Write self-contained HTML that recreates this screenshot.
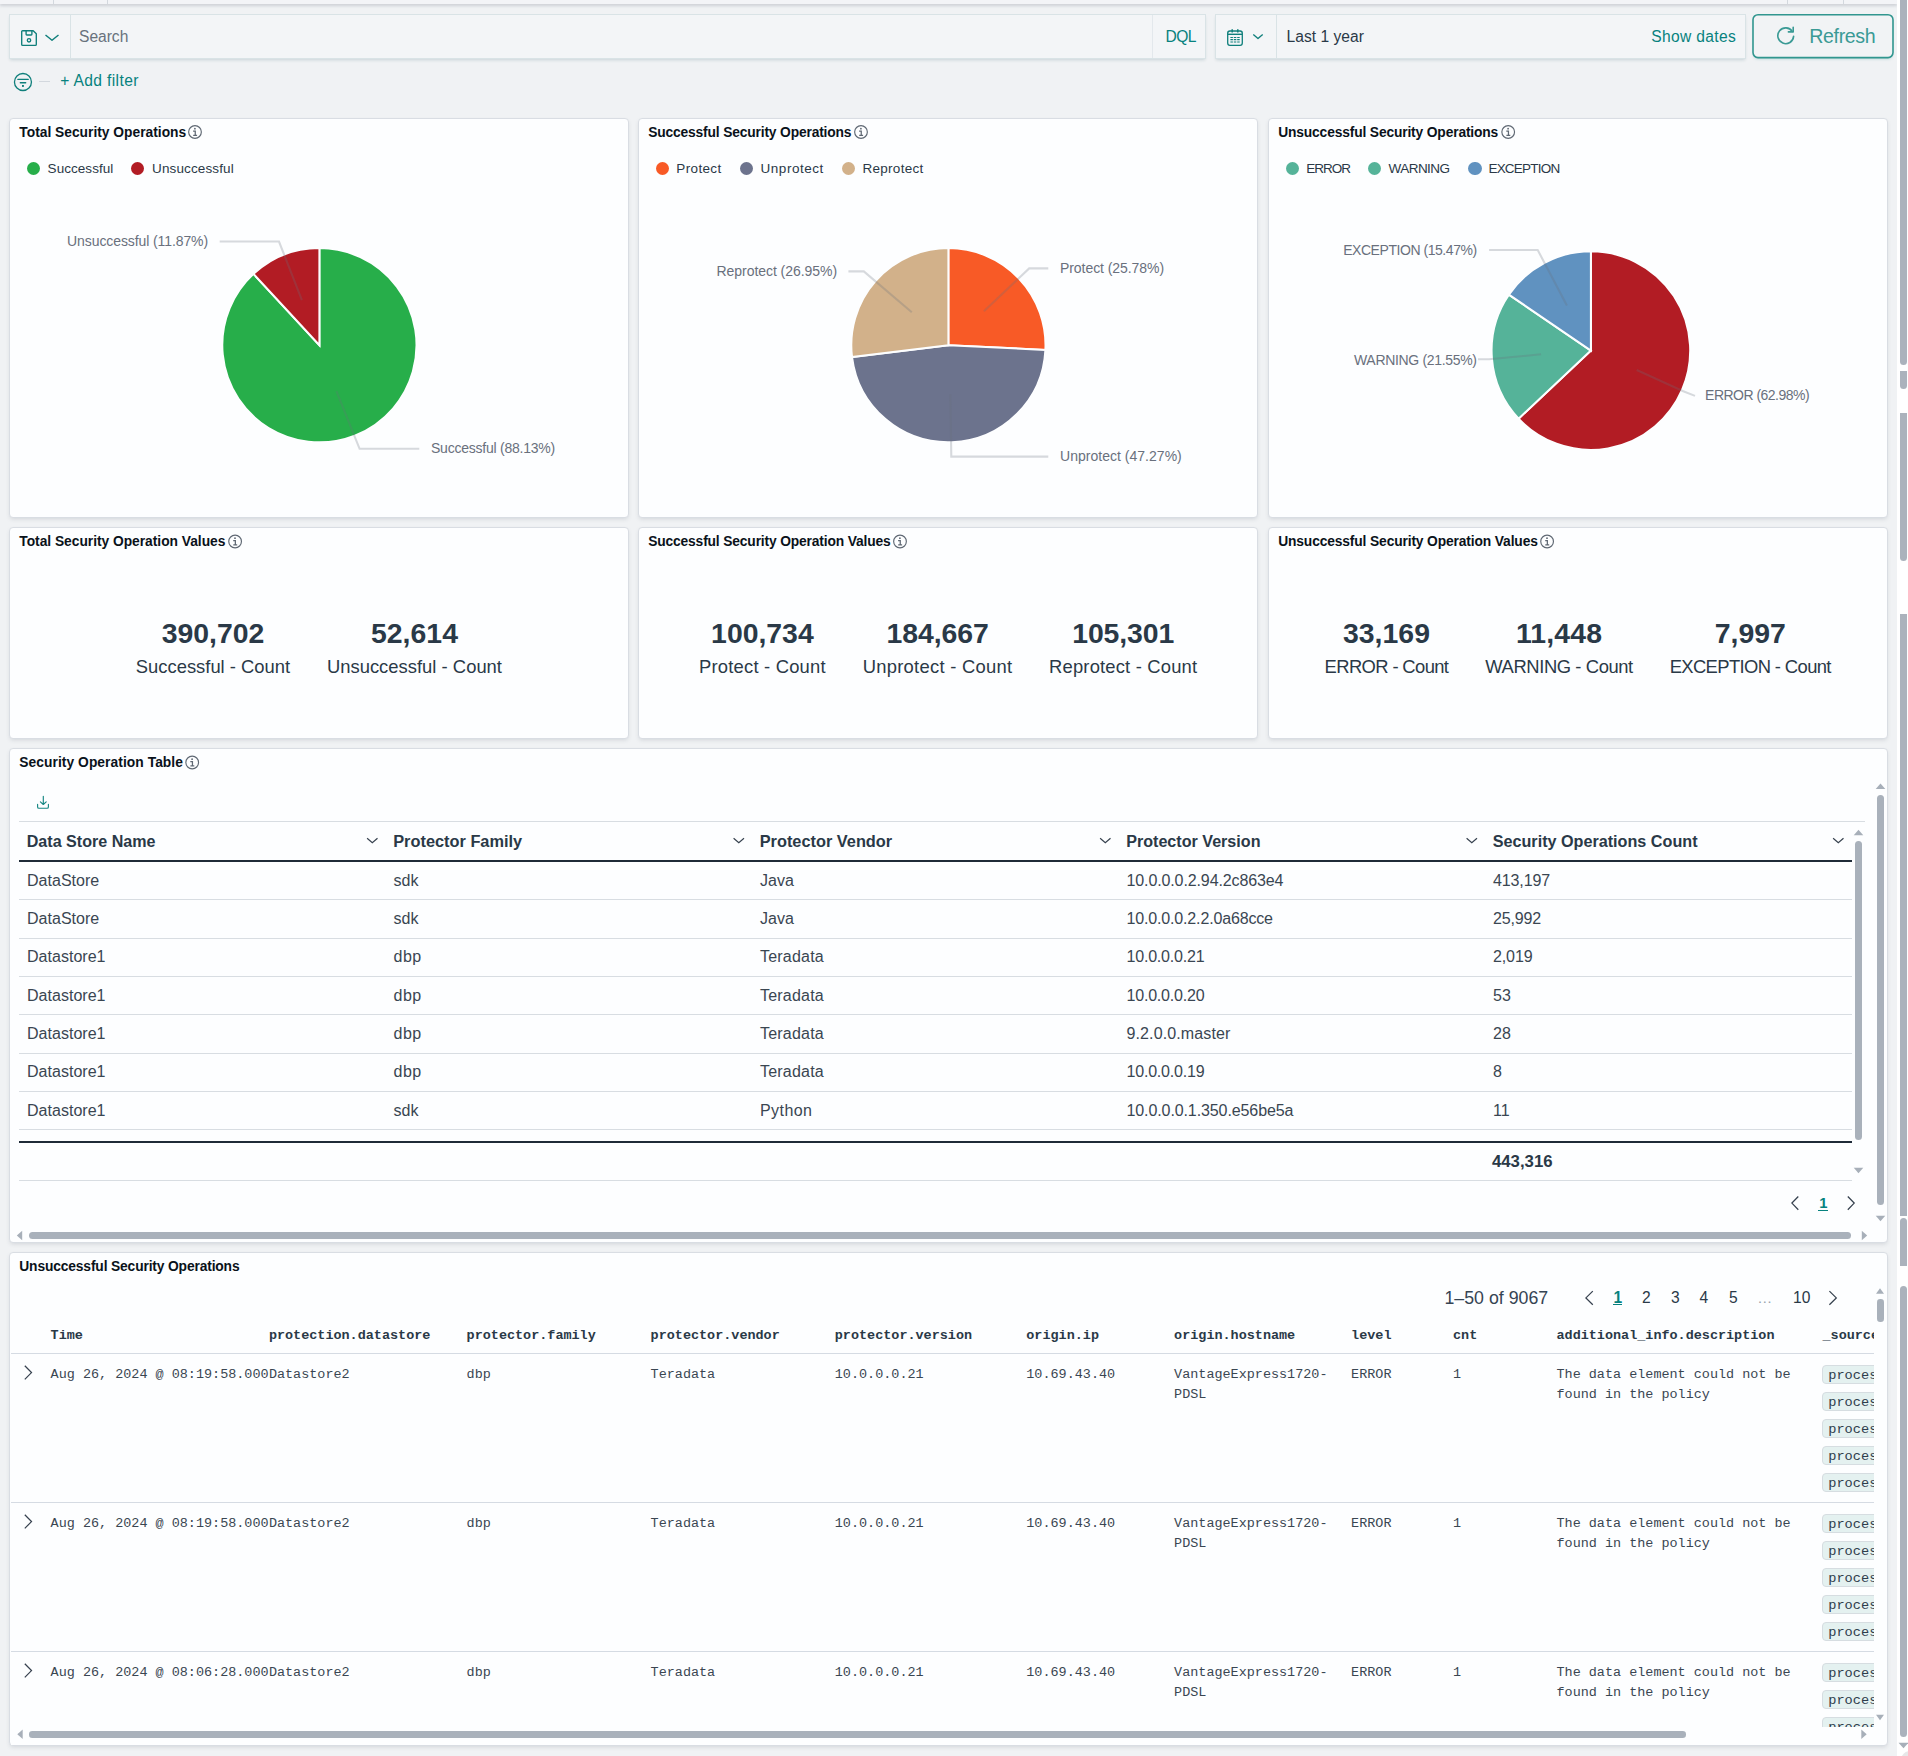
<!DOCTYPE html>
<html><head><meta charset="utf-8"><title>Dashboard</title>
<style>
html,body{margin:0;padding:0;}
body{width:1908px;height:1756px;overflow:hidden;position:relative;background:#f0f2f4;font-family:"Liberation Sans",sans-serif;}
.t{position:absolute;white-space:nowrap;line-height:normal;}
.m{font-family:"Liberation Mono",monospace;}
.b{position:absolute;box-sizing:border-box;}
.panel{position:absolute;box-sizing:border-box;background:#fdfeff;border:1px solid #d9dde3;border-radius:4px;box-shadow:0 2px 4px -1px rgba(60,70,90,0.17);}
svg{position:absolute;overflow:visible;}
</style></head><body>
<div class="b" style="left:0px;top:0px;width:1897px;height:4px;background:#f3f4f7;box-shadow:0 2px 3px rgba(40,50,70,0.17);"></div>
<div class="b" style="left:53px;top:0px;width:1px;height:4px;background:#d3d8de;"></div>
<div class="b" style="left:107px;top:0px;width:1px;height:4px;background:#d3d8de;"></div>
<div class="b" style="left:1787px;top:0px;width:1px;height:4px;background:#d3d8de;"></div>
<div class="b" style="left:1843px;top:0px;width:1px;height:4px;background:#d3d8de;"></div>
<div class="b" style="left:9px;top:14px;width:1197px;height:45px;background:#f3f5f7;border:1px solid #d9e3e6;box-shadow:0 2px 3px -1px rgba(110,140,150,0.3);"></div>
<div class="b" style="left:70px;top:15px;width:1px;height:43px;background:#d9e3e6;"></div>
<div class="b" style="left:1152px;top:15px;width:1px;height:43px;background:#e3e8ec;"></div>
<div class="t" style="left:79.00px;top:28px;font-size:15.60px;color:#68727d;letter-spacing:-0.021px;">Search</div>
<div class="t" style="left:1165.50px;top:28px;font-size:15.60px;color:#07827E;letter-spacing:-0.525px;">DQL</div>
<div class="b" style="left:1215px;top:14px;width:531px;height:45px;background:#f3f5f7;border:1px solid #d9e3e6;box-shadow:0 2px 3px -1px rgba(110,140,150,0.3);"></div>
<div class="b" style="left:1276px;top:15px;width:1px;height:43px;background:#d9e3e6;"></div>
<div class="t" style="left:1286.50px;top:28px;font-size:15.60px;color:#2A3947;letter-spacing:0.029px;">Last 1 year</div>
<div class="t" style="left:1651.20px;top:28px;font-size:15.60px;color:#07827E;letter-spacing:0.338px;">Show dates</div>
<div class="b" style="left:1753px;top:15px;width:140px;height:42px;border-radius:5px;background:#f1f3f5;box-shadow:0 3px 3px -1px rgba(7,130,126,0.25);"></div>
<div class="t" style="left:1809.30px;top:25px;font-size:19.60px;color:#3a9a95;letter-spacing:-0.376px;">Refresh</div>
<div class="b" style="left:39px;top:81px;width:11px;height:1px;background:#d3d8de;"></div>
<div class="t" style="left:60.20px;top:72px;font-size:15.60px;color:#07827E;letter-spacing:0.371px;">+ Add filter</div>
<div class="panel" style="left:9px;top:118px;width:620px;height:400px"></div>
<div class="panel" style="left:9px;top:527px;width:620px;height:212px"></div>
<div class="panel" style="left:638px;top:118px;width:620px;height:400px"></div>
<div class="panel" style="left:638px;top:527px;width:620px;height:212px"></div>
<div class="panel" style="left:1268px;top:118px;width:620px;height:400px"></div>
<div class="panel" style="left:1268px;top:527px;width:620px;height:212px"></div>
<div class="panel" style="left:9px;top:748px;width:1879px;height:495px"></div>
<div class="panel" style="left:9px;top:1252px;width:1879px;height:494px"></div>
<div class="t" style="left:19.30px;top:125px;font-size:13.80px;font-weight:700;color:#0A121A;">Total Security Operations</div>
<div class="t" style="left:648.20px;top:125px;font-size:13.80px;font-weight:700;color:#0A121A;letter-spacing:-0.155px;">Successful Security Operations</div>
<div class="t" style="left:1278.20px;top:125px;font-size:13.80px;font-weight:700;color:#0A121A;letter-spacing:-0.147px;">Unsuccessful Security Operations</div>
<div class="t" style="left:19.30px;top:534px;font-size:13.80px;font-weight:700;color:#0A121A;letter-spacing:-0.023px;">Total Security Operation Values</div>
<div class="t" style="left:648.20px;top:534px;font-size:13.80px;font-weight:700;color:#0A121A;letter-spacing:-0.148px;">Successful Security Operation Values</div>
<div class="t" style="left:1278.20px;top:534px;font-size:13.80px;font-weight:700;color:#0A121A;letter-spacing:-0.132px;">Unsuccessful Security Operation Values</div>
<div class="t" style="left:19.30px;top:755px;font-size:13.80px;font-weight:700;color:#0A121A;letter-spacing:0.058px;">Security Operation Table</div>
<div class="t" style="left:19.30px;top:1259px;font-size:13.80px;font-weight:700;color:#0A121A;letter-spacing:-0.141px;">Unsuccessful Security Operations</div>
<div class="b" style="left:26.8px;top:161.7px;width:13.5px;height:13.5px;border-radius:50%;background:#27AE4A"></div>
<div class="t" style="left:47.60px;top:161px;font-size:13.50px;color:#2A3947;letter-spacing:0.052px;">Successful</div>
<div class="b" style="left:130.8px;top:161.7px;width:13.5px;height:13.5px;border-radius:50%;background:#B21C24"></div>
<div class="t" style="left:152.00px;top:161px;font-size:13.50px;color:#2A3947;letter-spacing:0.127px;">Unsuccessful</div>
<div class="b" style="left:655.8px;top:161.7px;width:13.5px;height:13.5px;border-radius:50%;background:#F85A26"></div>
<div class="t" style="left:676.30px;top:161px;font-size:13.50px;color:#2A3947;letter-spacing:0.362px;">Protect</div>
<div class="b" style="left:739.6px;top:161.7px;width:13.5px;height:13.5px;border-radius:50%;background:#6C738D"></div>
<div class="t" style="left:760.50px;top:161px;font-size:13.50px;color:#2A3947;letter-spacing:0.541px;">Unprotect</div>
<div class="b" style="left:841.6px;top:161.7px;width:13.5px;height:13.5px;border-radius:50%;background:#D2B18A"></div>
<div class="t" style="left:862.50px;top:161px;font-size:13.50px;color:#2A3947;letter-spacing:0.275px;">Reprotect</div>
<div class="b" style="left:1285.8px;top:161.7px;width:13.5px;height:13.5px;border-radius:50%;background:#55B399"></div>
<div class="t" style="left:1306.30px;top:161px;font-size:13.50px;color:#2A3947;letter-spacing:-1.031px;">ERROR</div>
<div class="b" style="left:1367.7px;top:161.7px;width:13.5px;height:13.5px;border-radius:50%;background:#55B399"></div>
<div class="t" style="left:1388.50px;top:161px;font-size:13.50px;color:#2A3947;letter-spacing:-0.535px;">WARNING</div>
<div class="b" style="left:1468.0px;top:161.7px;width:13.5px;height:13.5px;border-radius:50%;background:#6092C0"></div>
<div class="t" style="left:1488.40px;top:161px;font-size:13.50px;color:#2A3947;letter-spacing:-0.768px;">EXCEPTION</div>
<div class="t" style="left:67.10px;top:233px;font-size:14.00px;color:#69707D;letter-spacing:-0.096px;">Unsuccessful (11.87%)</div>
<div class="t" style="left:431.00px;top:440px;font-size:14.00px;color:#69707D;letter-spacing:-0.231px;">Successful (88.13%)</div>
<div class="t" style="left:716.50px;top:263px;font-size:14.00px;color:#69707D;letter-spacing:-0.050px;">Reprotect (26.95%)</div>
<div class="t" style="left:1060.00px;top:260px;font-size:14.00px;color:#69707D;letter-spacing:-0.066px;">Protect (25.78%)</div>
<div class="t" style="left:1060.00px;top:448px;font-size:14.00px;color:#69707D;letter-spacing:0.023px;">Unprotect (47.27%)</div>
<div class="t" style="left:1343.20px;top:242px;font-size:14.00px;color:#69707D;letter-spacing:-0.450px;">EXCEPTION (15.47%)</div>
<div class="t" style="left:1354.00px;top:352px;font-size:14.00px;color:#69707D;letter-spacing:-0.321px;">WARNING (21.55%)</div>
<div class="t" style="left:1705.10px;top:387px;font-size:14.00px;color:#69707D;letter-spacing:-0.518px;">ERROR (62.98%)</div>
<div class="t" style="left:161.70px;top:617px;font-size:28.40px;font-weight:700;color:#2A3947;letter-spacing:-0.008px;">390,702</div>
<div class="t" style="left:135.85px;top:656px;font-size:18.40px;color:#2A3947;letter-spacing:-0.007px;">Successful - Count</div>
<div class="t" style="left:370.90px;top:617px;font-size:28.40px;font-weight:700;color:#2A3947;letter-spacing:0.056px;">52,614</div>
<div class="t" style="left:326.90px;top:656px;font-size:18.40px;color:#2A3947;letter-spacing:0.016px;">Unsuccessful - Count</div>
<div class="t" style="left:711.10px;top:617px;font-size:28.40px;font-weight:700;color:#2A3947;letter-spacing:-0.008px;">100,734</div>
<div class="t" style="left:699.00px;top:656px;font-size:18.40px;color:#2A3947;letter-spacing:0.204px;">Protect - Count</div>
<div class="t" style="left:886.45px;top:617px;font-size:28.40px;font-weight:700;color:#2A3947;letter-spacing:-0.051px;">184,667</div>
<div class="t" style="left:862.65px;top:656px;font-size:18.40px;color:#2A3947;letter-spacing:0.275px;">Unprotect - Count</div>
<div class="t" style="left:1072.20px;top:617px;font-size:28.40px;font-weight:700;color:#2A3947;letter-spacing:-0.094px;">105,301</div>
<div class="t" style="left:1049.05px;top:656px;font-size:18.40px;color:#2A3947;letter-spacing:0.181px;">Reprotect - Count</div>
<div class="t" style="left:1342.90px;top:617px;font-size:28.40px;font-weight:700;color:#2A3947;letter-spacing:0.056px;">33,169</div>
<div class="t" style="left:1324.60px;top:656px;font-size:18.40px;color:#2A3947;letter-spacing:-0.623px;">ERROR - Count</div>
<div class="t" style="left:1516.00px;top:617px;font-size:28.40px;font-weight:700;color:#2A3947;letter-spacing:0.150px;">11,448</div>
<div class="t" style="left:1485.30px;top:656px;font-size:18.40px;color:#2A3947;letter-spacing:-0.406px;">WARNING - Count</div>
<div class="t" style="left:1714.75px;top:617px;font-size:28.40px;font-weight:700;color:#2A3947;letter-spacing:0.006px;">7,997</div>
<div class="t" style="left:1669.65px;top:656px;font-size:18.40px;color:#2A3947;letter-spacing:-0.617px;">EXCEPTION - Count</div>
<div class="b" style="left:19px;top:821px;width:1846px;height:1px;background:#d8dde2;"></div>
<div class="t" style="left:26.75px;top:832px;font-size:16.09px;font-weight:700;color:#2A3947;">Data Store Name</div>
<div class="t" style="left:393.20px;top:832px;font-size:16.35px;font-weight:700;color:#2A3947;">Protector Family</div>
<div class="t" style="left:759.70px;top:832px;font-size:16.33px;font-weight:700;color:#2A3947;">Protector Vendor</div>
<div class="t" style="left:1126.20px;top:832px;font-size:16.13px;font-weight:700;color:#2A3947;">Protector Version</div>
<div class="t" style="left:1492.70px;top:832px;font-size:16.18px;font-weight:700;color:#2A3947;">Security Operations Count</div>
<div class="b" style="left:19px;top:860px;width:1833px;height:2px;background:#1f2b38;"></div>
<div class="t" style="left:27.05px;top:871px;font-size:16.05px;color:#3a4652;">DataStore</div>
<div class="t" style="left:393.50px;top:871px;font-size:16.05px;color:#3a4652;">sdk</div>
<div class="t" style="left:760.00px;top:871px;font-size:16.05px;color:#3a4652;">Java</div>
<div class="t" style="left:1126.50px;top:871px;font-size:16.05px;color:#3a4652;letter-spacing:-0.129px;">10.0.0.0.2.94.2c863e4</div>
<div class="t" style="left:1493.00px;top:871px;font-size:16.05px;color:#3a4652;letter-spacing:-0.144px;">413,197</div>
<div class="b" style="left:19px;top:899px;width:1833px;height:1px;background:#d8dde2;"></div>
<div class="t" style="left:27.05px;top:909px;font-size:16.05px;color:#3a4652;">DataStore</div>
<div class="t" style="left:393.50px;top:909px;font-size:16.05px;color:#3a4652;">sdk</div>
<div class="t" style="left:760.00px;top:909px;font-size:16.05px;color:#3a4652;">Java</div>
<div class="t" style="left:1126.50px;top:909px;font-size:16.05px;color:#3a4652;letter-spacing:-0.170px;">10.0.0.0.2.2.0a68cce</div>
<div class="t" style="left:1493.00px;top:909px;font-size:16.05px;color:#3a4652;letter-spacing:-0.180px;">25,992</div>
<div class="b" style="left:19px;top:938px;width:1833px;height:1px;background:#d8dde2;"></div>
<div class="t" style="left:27.05px;top:947px;font-size:16.05px;color:#3a4652;">Datastore1</div>
<div class="t" style="left:393.50px;top:947px;font-size:16.05px;color:#3a4652;letter-spacing:0.492px;">dbp</div>
<div class="t" style="left:760.00px;top:947px;font-size:16.05px;color:#3a4652;letter-spacing:0.194px;">Teradata</div>
<div class="t" style="left:1126.50px;top:947px;font-size:16.05px;color:#3a4652;letter-spacing:-0.209px;">10.0.0.0.21</div>
<div class="t" style="left:1493.00px;top:947px;font-size:16.05px;color:#3a4652;letter-spacing:-0.131px;">2,019</div>
<div class="b" style="left:19px;top:976px;width:1833px;height:1px;background:#d8dde2;"></div>
<div class="t" style="left:27.05px;top:986px;font-size:16.05px;color:#3a4652;">Datastore1</div>
<div class="t" style="left:393.50px;top:986px;font-size:16.05px;color:#3a4652;letter-spacing:0.492px;">dbp</div>
<div class="t" style="left:760.00px;top:986px;font-size:16.05px;color:#3a4652;letter-spacing:0.194px;">Teradata</div>
<div class="t" style="left:1126.50px;top:986px;font-size:16.05px;color:#3a4652;letter-spacing:-0.209px;">10.0.0.0.20</div>
<div class="t" style="left:1493.00px;top:986px;font-size:16.05px;color:#3a4652;">53</div>
<div class="b" style="left:19px;top:1014px;width:1833px;height:1px;background:#d8dde2;"></div>
<div class="t" style="left:27.05px;top:1024px;font-size:16.05px;color:#3a4652;">Datastore1</div>
<div class="t" style="left:393.50px;top:1024px;font-size:16.05px;color:#3a4652;letter-spacing:0.492px;">dbp</div>
<div class="t" style="left:760.00px;top:1024px;font-size:16.05px;color:#3a4652;letter-spacing:0.194px;">Teradata</div>
<div class="t" style="left:1126.50px;top:1024px;font-size:16.05px;color:#3a4652;letter-spacing:0.102px;">9.2.0.0.master</div>
<div class="t" style="left:1493.00px;top:1024px;font-size:16.05px;color:#3a4652;">28</div>
<div class="b" style="left:19px;top:1053px;width:1833px;height:1px;background:#d8dde2;"></div>
<div class="t" style="left:27.05px;top:1062px;font-size:16.05px;color:#3a4652;">Datastore1</div>
<div class="t" style="left:393.50px;top:1062px;font-size:16.05px;color:#3a4652;letter-spacing:0.492px;">dbp</div>
<div class="t" style="left:760.00px;top:1062px;font-size:16.05px;color:#3a4652;letter-spacing:0.194px;">Teradata</div>
<div class="t" style="left:1126.50px;top:1062px;font-size:16.05px;color:#3a4652;letter-spacing:-0.209px;">10.0.0.0.19</div>
<div class="t" style="left:1493.00px;top:1062px;font-size:16.05px;color:#3a4652;">8</div>
<div class="b" style="left:19px;top:1091px;width:1833px;height:1px;background:#d8dde2;"></div>
<div class="t" style="left:27.05px;top:1101px;font-size:16.05px;color:#3a4652;">Datastore1</div>
<div class="t" style="left:393.50px;top:1101px;font-size:16.05px;color:#3a4652;">sdk</div>
<div class="t" style="left:760.00px;top:1101px;font-size:16.05px;color:#3a4652;letter-spacing:0.424px;">Python</div>
<div class="t" style="left:1126.50px;top:1101px;font-size:16.05px;color:#3a4652;letter-spacing:-0.116px;">10.0.0.0.1.350.e56be5a</div>
<div class="t" style="left:1493.00px;top:1101px;font-size:16.05px;color:#3a4652;">11</div>
<div class="b" style="left:19px;top:1129px;width:1833px;height:1px;background:#d8dde2;"></div>
<div class="b" style="left:19px;top:1141px;width:1833px;height:2px;background:#1f2b38;"></div>
<div class="t" style="left:1492.00px;top:1152px;font-size:16.74px;font-weight:700;color:#2A3947;">443,316</div>
<div class="b" style="left:19px;top:1180px;width:1833px;height:1px;background:#d8dde2;"></div>
<div class="t" style="left:1819.20px;top:1195px;font-size:14.80px;font-weight:700;color:#07827E;">1</div>
<div class="b" style="left:1818px;top:1210px;width:10px;height:1px;background:#07827E;"></div>
<div class="b" style="left:1877px;top:795px;width:7px;height:410px;background:#a9b1bb;border-radius:3.5px;"></div>
<div class="b" style="left:1855px;top:841px;width:7px;height:299px;background:#a9b1bb;border-radius:3.5px;"></div>
<div class="b" style="left:29px;top:1232px;width:1822px;height:7px;background:#a9b1bb;border-radius:3.5px;"></div>
<div class="t" style="left:1444.50px;top:1288px;font-size:17.76px;color:#364453;">1–50 of 9067</div>
<div class="t" style="left:1613.60px;top:1289px;font-size:15.60px;font-weight:700;color:#07827E;">1</div>
<div class="b" style="left:1613px;top:1304px;width:9px;height:1px;background:#07827E;"></div>
<div class="t" style="left:1642.00px;top:1289px;font-size:15.60px;color:#2A3947;">2</div>
<div class="t" style="left:1671.00px;top:1289px;font-size:15.60px;color:#2A3947;">3</div>
<div class="t" style="left:1699.60px;top:1289px;font-size:15.60px;color:#2A3947;">4</div>
<div class="t" style="left:1729.00px;top:1289px;font-size:15.60px;color:#2A3947;">5</div>
<div class="t" style="left:1757.20px;top:1289px;font-size:15.00px;color:#98a2ad;">…</div>
<div class="t" style="left:1793.10px;top:1289px;font-size:15.60px;color:#2A3947;">10</div>
<div class="t m" style="left:50.60px;top:1328px;font-size:13.46px;font-weight:700;color:#2A3947;">Time</div>
<div class="t m" style="left:268.90px;top:1328px;font-size:13.46px;font-weight:700;color:#2A3947;">protection.datastore</div>
<div class="t m" style="left:466.60px;top:1328px;font-size:13.46px;font-weight:700;color:#2A3947;">protector.family</div>
<div class="t m" style="left:650.60px;top:1328px;font-size:13.46px;font-weight:700;color:#2A3947;">protector.vendor</div>
<div class="t m" style="left:834.80px;top:1328px;font-size:13.46px;font-weight:700;color:#2A3947;">protector.version</div>
<div class="t m" style="left:1026.30px;top:1328px;font-size:13.46px;font-weight:700;color:#2A3947;">origin.ip</div>
<div class="t m" style="left:1174.10px;top:1328px;font-size:13.46px;font-weight:700;color:#2A3947;">origin.hostname</div>
<div class="t m" style="left:1351.10px;top:1328px;font-size:13.46px;font-weight:700;color:#2A3947;">level</div>
<div class="t m" style="left:1453.00px;top:1328px;font-size:13.46px;font-weight:700;color:#2A3947;">cnt</div>
<div class="t m" style="left:1556.50px;top:1328px;font-size:13.46px;font-weight:700;color:#2A3947;">additional_info.description</div>
<div class="b" style="left:1815px;top:1320px;width:59px;height:407px;overflow:hidden">
<div class="t m" style="left:7.50px;top:8px;font-size:13.46px;font-weight:700;color:#2A3947;">_source</div>
<div class="b" style="left:7px;top:45px;width:80px;height:19px;background:#e4f1f0;border:1px solid #d6dde1;border-radius:4px;"></div>
<div class="t m" style="left:13.20px;top:48px;font-size:13.66px;color:#2f3d4c;">process</div>
<div class="b" style="left:7px;top:72px;width:80px;height:19px;background:#e4f1f0;border:1px solid #d6dde1;border-radius:4px;"></div>
<div class="t m" style="left:13.20px;top:75px;font-size:13.66px;color:#2f3d4c;">process</div>
<div class="b" style="left:7px;top:99px;width:80px;height:19px;background:#e4f1f0;border:1px solid #d6dde1;border-radius:4px;"></div>
<div class="t m" style="left:13.20px;top:102px;font-size:13.66px;color:#2f3d4c;">process</div>
<div class="b" style="left:7px;top:126px;width:80px;height:19px;background:#e4f1f0;border:1px solid #d6dde1;border-radius:4px;"></div>
<div class="t m" style="left:13.20px;top:129px;font-size:13.66px;color:#2f3d4c;">process</div>
<div class="b" style="left:7px;top:153px;width:80px;height:19px;background:#e4f1f0;border:1px solid #d6dde1;border-radius:4px;"></div>
<div class="t m" style="left:13.20px;top:156px;font-size:13.66px;color:#2f3d4c;">process</div>
<div class="b" style="left:7px;top:194px;width:80px;height:19px;background:#e4f1f0;border:1px solid #d6dde1;border-radius:4px;"></div>
<div class="t m" style="left:13.20px;top:197px;font-size:13.66px;color:#2f3d4c;">process</div>
<div class="b" style="left:7px;top:221px;width:80px;height:19px;background:#e4f1f0;border:1px solid #d6dde1;border-radius:4px;"></div>
<div class="t m" style="left:13.20px;top:224px;font-size:13.66px;color:#2f3d4c;">process</div>
<div class="b" style="left:7px;top:248px;width:80px;height:19px;background:#e4f1f0;border:1px solid #d6dde1;border-radius:4px;"></div>
<div class="t m" style="left:13.20px;top:251px;font-size:13.66px;color:#2f3d4c;">process</div>
<div class="b" style="left:7px;top:275px;width:80px;height:19px;background:#e4f1f0;border:1px solid #d6dde1;border-radius:4px;"></div>
<div class="t m" style="left:13.20px;top:278px;font-size:13.66px;color:#2f3d4c;">process</div>
<div class="b" style="left:7px;top:302px;width:80px;height:19px;background:#e4f1f0;border:1px solid #d6dde1;border-radius:4px;"></div>
<div class="t m" style="left:13.20px;top:305px;font-size:13.66px;color:#2f3d4c;">process</div>
<div class="b" style="left:7px;top:343px;width:80px;height:19px;background:#e4f1f0;border:1px solid #d6dde1;border-radius:4px;"></div>
<div class="t m" style="left:13.20px;top:346px;font-size:13.66px;color:#2f3d4c;">process</div>
<div class="b" style="left:7px;top:370px;width:80px;height:19px;background:#e4f1f0;border:1px solid #d6dde1;border-radius:4px;"></div>
<div class="t m" style="left:13.20px;top:373px;font-size:13.66px;color:#2f3d4c;">process</div>
<div class="b" style="left:7px;top:397px;width:80px;height:19px;background:#e4f1f0;border:1px solid #d6dde1;border-radius:4px;"></div>
<div class="t m" style="left:13.20px;top:400px;font-size:13.66px;color:#2f3d4c;">process</div>
<div class="b" style="left:7px;top:424px;width:80px;height:19px;background:#e4f1f0;border:1px solid #d6dde1;border-radius:4px;"></div>
<div class="t m" style="left:13.20px;top:427px;font-size:13.66px;color:#2f3d4c;">process</div>
<div class="b" style="left:7px;top:451px;width:80px;height:19px;background:#e4f1f0;border:1px solid #d6dde1;border-radius:4px;"></div>
<div class="t m" style="left:13.20px;top:454px;font-size:13.66px;color:#2f3d4c;">process</div>
</div>
<div class="b" style="left:11px;top:1353px;width:1863px;height:1px;background:#d5dbe3;"></div>
<div class="t m" style="left:50.60px;top:1367px;font-size:13.46px;color:#3a4652;">Aug 26, 2024 @ 08:19:58.000</div>
<div class="t m" style="left:268.90px;top:1367px;font-size:13.46px;color:#3a4652;">Datastore2</div>
<div class="t m" style="left:466.60px;top:1367px;font-size:13.46px;color:#3a4652;">dbp</div>
<div class="t m" style="left:650.60px;top:1367px;font-size:13.46px;color:#3a4652;">Teradata</div>
<div class="t m" style="left:834.80px;top:1367px;font-size:13.46px;color:#3a4652;">10.0.0.0.21</div>
<div class="t m" style="left:1026.30px;top:1367px;font-size:13.46px;color:#3a4652;">10.69.43.40</div>
<div class="t m" style="left:1174.10px;top:1367px;font-size:13.46px;color:#3a4652;">VantageExpress1720-</div>
<div class="t m" style="left:1351.10px;top:1367px;font-size:13.46px;color:#3a4652;">ERROR</div>
<div class="t m" style="left:1453.00px;top:1367px;font-size:13.46px;color:#3a4652;">1</div>
<div class="t m" style="left:1556.50px;top:1367px;font-size:13.46px;color:#3a4652;">The data element could not be</div>
<div class="t m" style="left:1174.10px;top:1387px;font-size:13.46px;color:#3a4652;">PDSL</div>
<div class="t m" style="left:1556.50px;top:1387px;font-size:13.46px;color:#3a4652;">found in the policy</div>
<div class="b" style="left:11px;top:1502px;width:1863px;height:1px;background:#d5dbe3;"></div>
<div class="t m" style="left:50.60px;top:1516px;font-size:13.46px;color:#3a4652;">Aug 26, 2024 @ 08:19:58.000</div>
<div class="t m" style="left:268.90px;top:1516px;font-size:13.46px;color:#3a4652;">Datastore2</div>
<div class="t m" style="left:466.60px;top:1516px;font-size:13.46px;color:#3a4652;">dbp</div>
<div class="t m" style="left:650.60px;top:1516px;font-size:13.46px;color:#3a4652;">Teradata</div>
<div class="t m" style="left:834.80px;top:1516px;font-size:13.46px;color:#3a4652;">10.0.0.0.21</div>
<div class="t m" style="left:1026.30px;top:1516px;font-size:13.46px;color:#3a4652;">10.69.43.40</div>
<div class="t m" style="left:1174.10px;top:1516px;font-size:13.46px;color:#3a4652;">VantageExpress1720-</div>
<div class="t m" style="left:1351.10px;top:1516px;font-size:13.46px;color:#3a4652;">ERROR</div>
<div class="t m" style="left:1453.00px;top:1516px;font-size:13.46px;color:#3a4652;">1</div>
<div class="t m" style="left:1556.50px;top:1516px;font-size:13.46px;color:#3a4652;">The data element could not be</div>
<div class="t m" style="left:1174.10px;top:1536px;font-size:13.46px;color:#3a4652;">PDSL</div>
<div class="t m" style="left:1556.50px;top:1536px;font-size:13.46px;color:#3a4652;">found in the policy</div>
<div class="b" style="left:11px;top:1651px;width:1863px;height:1px;background:#d5dbe3;"></div>
<div class="t m" style="left:50.60px;top:1665px;font-size:13.46px;color:#3a4652;">Aug 26, 2024 @ 08:06:28.000</div>
<div class="t m" style="left:268.90px;top:1665px;font-size:13.46px;color:#3a4652;">Datastore2</div>
<div class="t m" style="left:466.60px;top:1665px;font-size:13.46px;color:#3a4652;">dbp</div>
<div class="t m" style="left:650.60px;top:1665px;font-size:13.46px;color:#3a4652;">Teradata</div>
<div class="t m" style="left:834.80px;top:1665px;font-size:13.46px;color:#3a4652;">10.0.0.0.21</div>
<div class="t m" style="left:1026.30px;top:1665px;font-size:13.46px;color:#3a4652;">10.69.43.40</div>
<div class="t m" style="left:1174.10px;top:1665px;font-size:13.46px;color:#3a4652;">VantageExpress1720-</div>
<div class="t m" style="left:1351.10px;top:1665px;font-size:13.46px;color:#3a4652;">ERROR</div>
<div class="t m" style="left:1453.00px;top:1665px;font-size:13.46px;color:#3a4652;">1</div>
<div class="t m" style="left:1556.50px;top:1665px;font-size:13.46px;color:#3a4652;">The data element could not be</div>
<div class="t m" style="left:1174.10px;top:1685px;font-size:13.46px;color:#3a4652;">PDSL</div>
<div class="t m" style="left:1556.50px;top:1685px;font-size:13.46px;color:#3a4652;">found in the policy</div>
<div class="b" style="left:11px;top:1728px;width:1864px;height:17px;background:#fdfeff;"></div>
<div class="b" style="left:28.6px;top:1731px;width:1657.0px;height:6.6px;background:#a9b1bb;border-radius:3.3px;"></div>
<div class="b" style="left:1877px;top:1299.3px;width:6.5px;height:23.100000000000136px;background:#a9b1bb;border-radius:3.25px;"></div>
<div class="b" style="left:1897px;top:0px;width:11px;height:1756px;background:#ffffff;"></div>
<div class="b" style="left:1900px;top:0px;width:7px;height:364.8px;background:#abb2bc;border-radius:0px 0px 3.5px 3.5px;"></div>
<div class="b" style="left:1900px;top:371px;width:7px;height:17.899999999999977px;background:#abb2bc;border-radius:0px 0px 3.5px 3.5px;"></div>
<div class="b" style="left:1900px;top:413px;width:7px;height:147.79999999999995px;background:#abb2bc;border-radius:0px 0px 3.5px 3.5px;"></div>
<div class="b" style="left:1900px;top:614.1px;width:7px;height:601.6px;background:#abb2bc;border-radius:0px 0px 0px 0px;"></div>
<div class="b" style="left:1900px;top:1218px;width:7px;height:47.90000000000009px;background:#abb2bc;border-radius:3.5px 3.5px 0px 0px;"></div>
<div class="b" style="left:1900px;top:1286px;width:7px;height:450.79999999999995px;background:#abb2bc;border-radius:3.5px 3.5px 3.5px 3.5px;"></div>
<svg style="left:0;top:0" width="1908" height="1756"><g transform="translate(21 30)" fill="none" stroke="#0f7f7b" stroke-width="1.35" stroke-linejoin="round"><path d="M.7 1.6a.9.9 0 0 1 .9-.9H12.2L15.3 3.8V14.4a.9.9 0 0 1-.9.9H1.6a.9.9 0 0 1-.9-.9z"/><path d="M5.1 .8V4.3a.7.7 0 0 0 .7.7h4.4a.7.7 0 0 0 .7-.7V.8"/><circle cx="8" cy="10.3" r="1.7"/></g><path d="M45.5 35L52 40.3L58.5 35" fill="none" stroke="#0f7f7b" stroke-width="1.45" stroke-linejoin="round"/><g fill="none" stroke="#0f7f7b" stroke-width="1.3"><rect x="1227.7" y="31" width="14.6" height="14.3" rx="2.2"/><path d="M1227.7 34.3H1242.3" stroke-width="1.4"/><path d="M1232.2 29.2V32.6M1237.8 29.2V32.6" stroke-width="1.5"/><path d="M1230.4 37.5h2.5M1233.8 37.5h2.5M1237.2 37.5h2.5M1230.4 39.7h2.5M1233.8 39.7h2.5M1237.2 39.7h2.5M1230.4 42h2.5M1233.8 42h2.5M1237.2 42h2.5" stroke-width="1.2"/></g><path d="M1253.3 34.4L1258 38.5L1262.7 34.4" fill="none" stroke="#0f7f7b" stroke-width="1.35" stroke-linejoin="round"/><rect x="1753" y="14.7" width="140" height="42.9" rx="5" fill="none" stroke="#31968f" stroke-width="1.6"/><g fill="none" stroke="#3a9a95" stroke-width="1.6" stroke-linecap="round" stroke-linejoin="round"><path d="M1792.3 31.4A7.9 7.9 0 1 0 1793.6 36.4"/><path d="M1793.2 27.2V31.9H1788.4"/></g><g fill="none" stroke="#0f7f7b" stroke-width="1.3" stroke-linecap="round"><circle cx="22.95" cy="82" r="8.5"/><path d="M17.9 79.4H28.2M20.3 82.7H25.7" stroke-width="1.35"/><rect x="22" y="85" width="1.9" height="1.9" fill="#0f7f7b" stroke="none"/></g><g fill="none" stroke="#5f6873" stroke-width="1.15"><circle cx="195" cy="132" r="6.35"/><path d="M193.1 131H195.25V135.3M193.2 135.45H197.1" stroke-width="1.25"/><circle cx="194.9" cy="128.7" r=".9" fill="#5f6873" stroke="none"/></g><g fill="none" stroke="#5f6873" stroke-width="1.15"><circle cx="861" cy="132" r="6.35"/><path d="M859.1 131H861.25V135.3M859.2 135.45H863.1" stroke-width="1.25"/><circle cx="860.9" cy="128.7" r=".9" fill="#5f6873" stroke="none"/></g><g fill="none" stroke="#5f6873" stroke-width="1.15"><circle cx="1508.2" cy="132" r="6.35"/><path d="M1506.3 131H1508.45V135.3M1506.4 135.45H1510.3" stroke-width="1.25"/><circle cx="1508.1000000000001" cy="128.7" r=".9" fill="#5f6873" stroke="none"/></g><g fill="none" stroke="#5f6873" stroke-width="1.15"><circle cx="235.1" cy="541.5" r="6.35"/><path d="M233.2 540.5H235.35V544.8M233.29999999999998 544.95H237.2" stroke-width="1.25"/><circle cx="235.0" cy="538.2" r=".9" fill="#5f6873" stroke="none"/></g><g fill="none" stroke="#5f6873" stroke-width="1.15"><circle cx="900" cy="541.5" r="6.35"/><path d="M898.1 540.5H900.25V544.8M898.2 544.95H902.1" stroke-width="1.25"/><circle cx="899.9" cy="538.2" r=".9" fill="#5f6873" stroke="none"/></g><g fill="none" stroke="#5f6873" stroke-width="1.15"><circle cx="1547.1" cy="541.5" r="6.35"/><path d="M1545.1999999999998 540.5H1547.35V544.8M1545.3 544.95H1549.1999999999998" stroke-width="1.25"/><circle cx="1547.0" cy="538.2" r=".9" fill="#5f6873" stroke="none"/></g><g fill="none" stroke="#5f6873" stroke-width="1.15"><circle cx="192.2" cy="762.5" r="6.35"/><path d="M190.29999999999998 761.5H192.45V765.8M190.39999999999998 765.95H194.29999999999998" stroke-width="1.25"/><circle cx="192.1" cy="759.2" r=".9" fill="#5f6873" stroke="none"/></g><path d="M319.40 345.20L319.40 248.10A97.1 97.1 0 1 1 253.51 273.88Z" fill="#27AE4A" stroke="#fdfeff" stroke-width="2" stroke-linejoin="miter"/><path d="M319.40 345.20L253.51 273.88A97.1 97.1 0 0 1 319.40 248.10Z" fill="#B21C24" stroke="#fdfeff" stroke-width="2" stroke-linejoin="miter"/><path d="M948.40 345.20L948.40 248.10A97.1 97.1 0 0 1 1045.38 349.96Z" fill="#F85A26" stroke="#fdfeff" stroke-width="2" stroke-linejoin="miter"/><path d="M948.40 345.20L1045.38 349.96A97.1 97.1 0 0 1 852.03 357.07Z" fill="#6C738D" stroke="#fdfeff" stroke-width="2" stroke-linejoin="miter"/><path d="M948.40 345.20L852.03 357.07A97.1 97.1 0 0 1 948.40 248.10Z" fill="#D2B18A" stroke="#fdfeff" stroke-width="2" stroke-linejoin="miter"/><path d="M1590.90 350.60L1590.90 251.30A99.3 99.3 0 1 1 1518.60 418.67Z" fill="#B21C24" stroke="#fdfeff" stroke-width="2" stroke-linejoin="miter"/><path d="M1590.90 350.60L1518.60 418.67A99.3 99.3 0 0 1 1508.88 294.63Z" fill="#55B399" stroke="#fdfeff" stroke-width="2" stroke-linejoin="miter"/><path d="M1590.90 350.60L1508.88 294.63A99.3 99.3 0 0 1 1590.90 251.30Z" fill="#6092C0" stroke="#fdfeff" stroke-width="2" stroke-linejoin="miter"/><path d="M219.7 241.5L279.0 241.5L301.9 300.2" fill="none" stroke="rgba(105,112,125,0.26)" stroke-width="2.1"/><path d="M336.4 391.2L359.6 448.8L419.3 448.8" fill="none" stroke="rgba(105,112,125,0.26)" stroke-width="2.1"/><path d="M848.4 271.4L863.8 271.4L911.8 312.3" fill="none" stroke="rgba(105,112,125,0.26)" stroke-width="2.1"/><path d="M1048.3 268.4L1029.2 268.4L983.9 311.3" fill="none" stroke="rgba(105,112,125,0.26)" stroke-width="2.1"/><path d="M950.3 394.2L951.3 456.6L1048.3 456.6" fill="none" stroke="rgba(105,112,125,0.26)" stroke-width="2.1"/><path d="M1489.1 250.0L1537.7 250.0L1566.9 305.6" fill="none" stroke="rgba(105,112,125,0.26)" stroke-width="2.1"/><path d="M1478.0 359.3L1489.0 359.3L1541.1 354.3" fill="none" stroke="rgba(105,112,125,0.26)" stroke-width="2.1"/><path d="M1636.7 370.0L1683.3 391.2L1695.0 395.9" fill="none" stroke="rgba(105,112,125,0.26)" stroke-width="2.1"/><g fill="none" stroke="#168783" stroke-width="1.15" stroke-linecap="round" stroke-linejoin="round"><path d="M43.3 796.3V804.2M40.4 801.8L43.3 804.5L46.2 801.8"/><path d="M37.6 804.4V806.9a1.3 1.3 0 0 0 1.3 1.3H47.1a1.3 1.3 0 0 0 1.3-1.3V804.4"/></g><path d="M367.1 838.2L372.3 842.7L377.5 838.2" fill="none" stroke="#36414e" stroke-width="1.2"/><path d="M733.6 838.2L738.8 842.7L744.0 838.2" fill="none" stroke="#36414e" stroke-width="1.2"/><path d="M1100.1 838.2L1105.3 842.7L1110.5 838.2" fill="none" stroke="#36414e" stroke-width="1.2"/><path d="M1466.6 838.2L1471.8 842.7L1477.0 838.2" fill="none" stroke="#36414e" stroke-width="1.2"/><path d="M1833.1 838.2L1838.3 842.7L1843.5 838.2" fill="none" stroke="#36414e" stroke-width="1.2"/><path d="M1798.30 1196.50L1791.90 1203.10L1798.30 1209.70" fill="none" stroke="#36414e" stroke-width="1.25"/><path d="M1847.80 1196.50L1854.20 1203.10L1847.80 1209.70" fill="none" stroke="#36414e" stroke-width="1.25"/><polygon points="1875.7,789.0 1885.3,789.0 1880.5,783.5999999999999" fill="#a7afb9"/><polygon points="1875.7,1215.8 1885.3,1215.8 1880.5,1221.2" fill="#a7afb9"/><polygon points="1853.7,835.2 1863.3,835.2 1858.5,829.8" fill="#a7afb9"/><polygon points="1853.7,1167.8 1863.3,1167.8 1858.5,1173.2" fill="#a7afb9"/><polygon points="22.2,1230.7 22.2,1240.3 16.8,1235.5" fill="#a7afb9"/><polygon points="1861.8,1230.7 1861.8,1240.3 1867.2,1235.5" fill="#a7afb9"/><path d="M1592.80 1291.10L1585.90 1297.90L1592.80 1304.70" fill="none" stroke="#36414e" stroke-width="1.25"/><path d="M1829.40 1291.10L1836.30 1297.90L1829.40 1304.70" fill="none" stroke="#36414e" stroke-width="1.25"/><path d="M24.80 1365.80L31.50 1372.60L24.80 1379.40" fill="none" stroke="#36414e" stroke-width="1.25"/><path d="M24.80 1514.80L31.50 1521.60L24.80 1528.40" fill="none" stroke="#36414e" stroke-width="1.25"/><path d="M24.80 1663.80L31.50 1670.60L24.80 1677.40" fill="none" stroke="#36414e" stroke-width="1.25"/><polygon points="22.7,1729.5 22.7,1739.1 17.3,1734.3" fill="#a7afb9"/><polygon points="1861.3,1729.5 1861.3,1739.1 1866.7,1734.3" fill="#a7afb9"/><polygon points="1876,1293.7 1884,1293.7 1880,1288.3" fill="#a7afb9"/><polygon points="1876,1714.8 1884,1714.8 1880,1720.2" fill="#a7afb9"/><polygon points="1898.5,1742.8 1908.5,1742.8 1903.5,1748.2" fill="#a7afb9"/></svg>
<div class="b" style="left:1901px;top:1751px;width:18px;height:18px;border-radius:50%;background:rgba(110,112,118,0.17);"></div>
</body></html>
